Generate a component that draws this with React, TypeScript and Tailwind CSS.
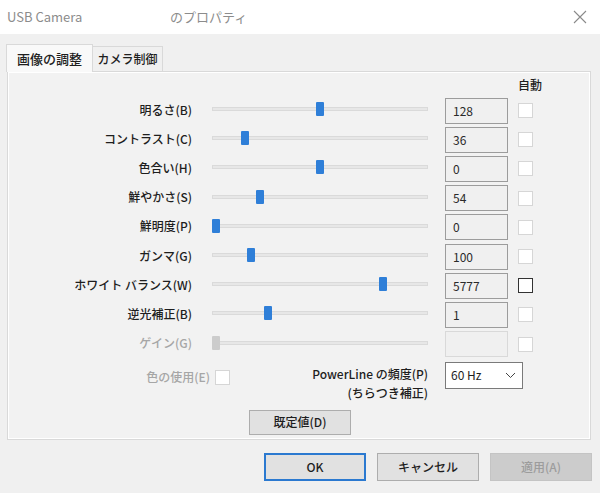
import React from 'react';

const FONT = '"Noto Sans CJK JP", "Noto Sans", sans-serif';

interface SliderRow {
  label: string;
  pos: number; // thumb centre, px from track start
  value: string;
  disabled?: boolean;
  focused?: boolean;
}

const rows: SliderRow[] = [
  { label: '明るさ(B)', pos: 108, value: '128' },
  { label: 'コントラスト(C)', pos: 33, value: '36' },
  { label: '色合い(H)', pos: 108, value: '0' },
  { label: '鮮やかさ(S)', pos: 48, value: '54' },
  { label: '鮮明度(P)', pos: 4, value: '0' },
  { label: 'ガンマ(G)', pos: 39, value: '100' },
  { label: 'ホワイト バランス(W)', pos: 171, value: '5777', focused: true },
  { label: '逆光補正(B)', pos: 56, value: '1' },
  { label: 'ゲイン(G)', pos: 4, value: '', disabled: true },
];

const Row: React.FC<{ row: SliderRow }> = ({ row }) => (
  <div className="flex items-center h-[29.2px]">
    <div
      className={`w-[183px] text-right text-[12px] leading-none font-medium -mt-[2px] ${
        row.disabled ? 'text-[#a6a6a6]' : 'text-[#1e1e1e]'
      }`}
    >
      {row.label}
    </div>
    <div className="ml-[20px] w-[216px] h-[14px] relative flex items-center -mt-[3px]">
      <div className="w-full h-[4px] bg-[#e7e7e7] border border-[#dadada]" />
      <div
        className={`absolute top-0 w-[8px] h-[14px] rounded-[1px] ${
          row.disabled ? 'bg-[#cccccc]' : 'bg-[#2f7fd8]'
        }`}
        style={{ left: row.pos - 4 }}
      />
    </div>
    <div
      className={`ml-[17px] w-[63px] h-[26px] flex items-center pl-[7px] text-[12px] text-[#2a2a2a] bg-[#f0f0f0] border ${
        row.disabled ? 'border-[#d9d9d9]' : 'border-[#9c9c9c]'
      }`}
    >
      {row.value}
    </div>
    <div
      className={`ml-[10px] w-[15px] h-[15px] bg-white ${
        row.focused ? 'border-[1.5px] border-[#333333]' : 'border border-[#d6d6d6]'
      }`}
    />
  </div>
);

export default function App() {
  return (
    <div
      className="w-[600px] h-[493px] bg-[#f0f0f0] flex flex-col overflow-hidden"
      style={{ fontFamily: FONT }}
    >
      {/* title bar */}
      <div className="h-[34px] bg-white flex items-center text-[13px] text-[#8c8c8c] shrink-0">
        <span className="ml-[7px] w-[163px]">USB Camera</span>
        <span>のプロパティ</span>
        <svg className="ml-auto mr-[13px]" width="14" height="14" viewBox="0 0 14 14">
          <path d="M1 1L13 13M13 1L1 13" stroke="#8a8a8a" strokeWidth="1.1" fill="none" />
        </svg>
      </div>

      {/* tabs */}
      <div className="flex items-end h-[37px] pl-[6px] shrink-0">
        <div className="h-[28px] w-[87px] bg-[#f9f9f9] border border-b-0 border-[#d9d9d9] flex items-center justify-center text-[13px] font-medium text-[#1e1e1e] relative top-[1px] z-10">
          画像の調整
        </div>
        <div className="h-[25px] w-[70px] bg-[#f0f0f0] border border-l-0 border-b-0 border-[#d9d9d9] flex items-center justify-center text-[12px] font-medium text-[#1e1e1e]">
          カメラ制御
        </div>
      </div>

      {/* panel */}
      <div className="ml-[7px] w-[584px] h-[369px] border border-[#d9d9d9] bg-[#f2f2f2] shrink-0">
        <div className="h-full border border-white flex flex-col">
          <div className="h-[23px] pt-[6px] flex">
            <span className="ml-[509px] text-[12px] leading-none font-medium text-[#1e1e1e]">自動</span>
          </div>
          {rows.map((r) => (
            <Row key={r.label} row={r} />
          ))}

          {/* color / powerline row */}
          <div className="flex mt-[3px]">
            <div className="flex items-start pt-[9px]">
              <span className="w-[201px] text-right text-[12px] leading-none font-medium text-[#a6a6a6]">
                色の使用(E)
              </span>
              <div className="ml-[5px] w-[15px] h-[15px] bg-white border border-[#d6d6d6] -mt-[1px]" />
            </div>
            <div className="w-[198px] text-right text-[12px] leading-[19px] font-medium text-[#1e1e1e] pt-[2px]">
              <div>PowerLine の頻度(P)</div>
              <div>(ちらつき補正)</div>
            </div>
            <div className="ml-[17px] w-[78px] h-[27px] bg-white border border-[#7a7a7a] flex items-center pl-[5px] pr-[6px] text-[12px] text-[#1e1e1e]">
              <span>60 Hz</span>
              <svg className="ml-auto" width="11" height="7" viewBox="0 0 11 7">
                <path d="M1 1L5.5 5.5L10 1" stroke="#444" strokeWidth="1" fill="none" />
              </svg>
            </div>
          </div>

          <div className="mt-[8px] ml-[240px] w-[102px] h-[25px] bg-[#e1e1e1] border border-[#adadad] flex items-center justify-center text-[12px] font-medium text-[#1e1e1e]">
            既定値(D)
          </div>
        </div>
      </div>

      {/* bottom buttons */}
      <div className="flex mt-[13px] ml-[264px] gap-[11px]">
        <div className="w-[102px] h-[28px] bg-[#e1e1e1] border-2 border-[#2b79d0] flex items-center justify-center text-[12px] font-medium text-[#1e1e1e]">
          OK
        </div>
        <div className="w-[102px] h-[28px] bg-[#e1e1e1] border border-[#adadad] flex items-center justify-center text-[12px] font-medium text-[#1e1e1e]">
          キャンセル
        </div>
        <div className="w-[102px] h-[28px] bg-[#cccccc] border border-[#c4c4c4] flex items-center justify-center text-[12px] font-medium text-[#9c9c9c]">
          適用(A)
        </div>
      </div>
    </div>
  );
}
